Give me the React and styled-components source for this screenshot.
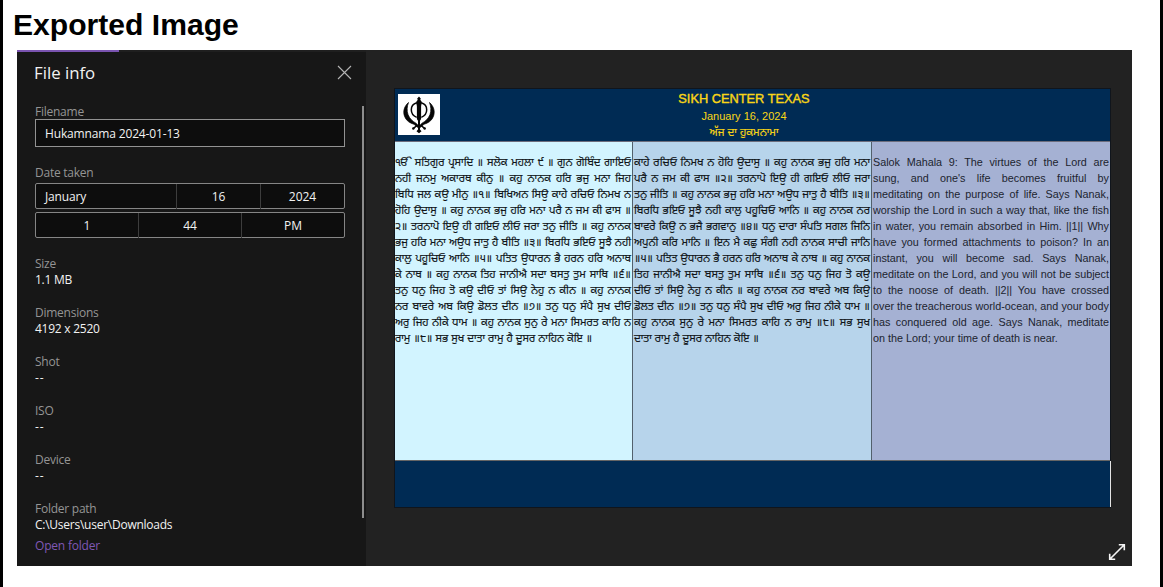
import React from "react";
import styled, { createGlobalStyle } from "styled-components";

const Global = createGlobalStyle`
  *, *::before, *::after { box-sizing: border-box; }
  body { margin: 0; background: #fff; overflow: hidden; }
`;

const Page = styled.main`
  height: 587px;
  padding: 0 28px 0 14px;
  border-left: 3px solid #000;
  border-right: 3px solid #000;
  background: #fff;
`;

const Heading = styled.h1`
  margin: 0 0 0 -4px;
  height: 50px;
  font: bold 30.1px/50px "Liberation Sans", Arial, sans-serif;
  color: #000;
`;

const Viewer = styled.section`
  display: flex;
  width: 1115px;
  height: 516px;
  background: #222;
`;

const Sidebar = styled.aside`
  width: 349px;
  background: #171717;
  font-family: "Open Sans", "Noto Sans", sans-serif;
  font-size: 12px;
  line-height: 16px;
  color: #f2f2f2;
`;

const Progress = styled.div`
  height: 2px;
  background: #1f1f1f;
  &::before {
    content: "";
    display: block;
    width: 102px;
    height: 2px;
    background: #7a54b0;
  }
`;

const SidebarHeader = styled.header`
  display: flex;
  align-items: center;
  justify-content: space-between;
  height: 41px;
  padding: 0 14px 0 17px;
`;

const SidebarTitle = styled.h2`
  margin: 0;
  font-size: 16.8px;
  font-weight: 400;
  line-height: 24px;
`;

const Scroller = styled.div`
  display: flex;
  justify-content: space-between;
  margin-top: 11px;
  padding: 0 2px 0 18px;
`;

const ScrollThumb = styled.div`
  width: 2px;
  height: 412px;
  margin-top: 2px;
  background: #8d8d8d;
`;

const Details = styled.div`
  width: 310px;
`;

const Label = styled.div`
  color: #959595;
  letter-spacing: -0.25px;
`;

const Value = styled.div`
  letter-spacing: ${(p) => (p.$empty ? "0.8px" : "-0.25px")};
`;

const Field = styled.div`
  margin-bottom: ${(p) => p.$gap || "17px"};
`;

const TextBox = styled.div`
  height: 28px;
  margin-top: -1px;
  padding-left: 9px;
  border: 1px solid #929292;
  background: #0d0d0d;
  line-height: 28px;
  letter-spacing: -0.15px;
`;

const DateRows = styled.div`
  padding-top: 2px;
`;

const Segments = styled.div`
  display: grid;
  grid-template-columns: ${(p) => p.$columns};
  height: 26px;
  margin-bottom: 3px;
  border: 1px solid #858585;
  border-radius: 2px;
  background: #0d0d0d;
  line-height: 25px;
`;

const Segment = styled.div`
  padding-left: ${(p) => (p.$start ? "9px" : "0")};
  text-align: ${(p) => (p.$start ? "left" : "center")};
  letter-spacing: ${(p) => (p.$start ? "-0.15px" : "0")};
  & + & { border-left: 1px solid #3d3d3d; }
`;

const FolderLink = styled.a`
  display: block;
  margin-top: 5px;
  color: #8058b5;
  letter-spacing: -0.2px;
`;

const Preview = styled.div`
  display: flex;
  flex-direction: column;
  flex: 1;
  padding: 38px 21px 0 28px;
`;

const Slide = styled.article`
  display: flex;
  flex-direction: column;
  width: 717px;
  height: 420px;
  border: 1px solid #10151c;
  font-family: "Liberation Sans", "Noto Sans Gurmukhi", sans-serif;
`;

const SlideHeader = styled.header`
  display: grid;
  grid-template-columns: 42px 1fr 42px;
  height: 53px;
  padding: 5px 16px 0 3px;
  border-bottom: 1px solid #6d6d7c;
  background: #002b54;
`;

const Emblem = styled.svg`
  display: block;
  width: 42px;
  height: 41px;
  background: #fff;
`;

const Titles = styled.div`
  margin-top: -4px;
  padding-right: 4px;
  color: #f9d616;
  text-align: center;
`;

const SlideTitle = styled.div`
  font-size: 12.8px;
  line-height: 17px;
  -webkit-text-stroke: 0.4px #f9d616;
`;

const SlideDate = styled.div`
  font-size: 11px;
  line-height: 18px;
`;

const SlideSubtitle = styled.div`
  font-size: 11px;
  line-height: 14px;
  -webkit-text-stroke: 0.15px #f9d616;
`;

const Columns = styled.div`
  display: grid;
  grid-template-columns: 237px 239px 239px;
  height: 319px;
  border-bottom: 1px solid #656565;
`;

const Column = styled.div`
  padding: 12px 1px 0 ${(p) => (p.$first ? "0" : "1px")};
  background: ${(p) => p.$bg};
  color: ${(p) => p.$ink || "#101418"};
  font-size: ${(p) => p.$size};
  -webkit-text-stroke: ${(p) => p.$stroke || "0"};
  & + & { border-left: 1px solid #52606c; }
`;

const Line = styled.div`
  height: 16px;
  line-height: 16px;
  white-space: nowrap;
  text-align: justify;
  text-align-last: justify;
  &:last-child { text-align-last: left; }
`;

const SlideFooter = styled.footer`
  flex: 1;
  background: #002b54;
  margin-right: -1px;
  border-right: 1px solid #e4e4e4;
`;

const ExpandIcon = styled.svg`
  align-self: flex-end;
  width: 18px;
  height: 18px;
  margin: 35px -15px 0 0;
`;

const gurmukhi = [
  "ੴ ਸਤਿਗੁਰ ਪ੍ਰਸਾਦਿ ॥ ਸਲੋਕ ਮਹਲਾ ੯ ॥ ਗੁਨ ਗੋਬਿੰਦ ਗਾਇਓ",
  "ਨਹੀ ਜਨਮੁ ਅਕਾਰਥ ਕੀਨੁ ॥ ਕਹੁ ਨਾਨਕ ਹਰਿ ਭਜੁ ਮਨਾ ਜਿਹ",
  "ਬਿਧਿ ਜਲ ਕਉ ਮੀਨੁ ॥੧॥ ਬਿਖਿਅਨ ਸਿਉ ਕਾਹੇ ਰਚਿਓ ਨਿਮਖ ਨ",
  "ਹੋਹਿ ਉਦਾਸੁ ॥ ਕਹੁ ਨਾਨਕ ਭਜੁ ਹਰਿ ਮਨਾ ਪਰੈ ਨ ਜਮ ਕੀ ਫਾਸ ॥",
  "੨॥ ਤਰਨਾਪੋ ਇਉ ਹੀ ਗਇਓ ਲੀਓ ਜਰਾ ਤਨੁ ਜੀਤਿ ॥ ਕਹੁ ਨਾਨਕ",
  "ਭਜੁ ਹਰਿ ਮਨਾ ਅਉਧ ਜਾਤੁ ਹੈ ਬੀਤਿ ॥੩॥ ਬਿਰਧਿ ਭਇਓ ਸੂਝੈ ਨਹੀ",
  "ਕਾਲੁ ਪਹੂਚਿਓ ਆਨਿ ॥੫॥ ਪਤਿਤ ਉਧਾਰਨ ਭੈ ਹਰਨ ਹਰਿ ਅਨਾਥ",
  "ਕੇ ਨਾਥ ॥ ਕਹੁ ਨਾਨਕ ਤਿਹ ਜਾਨੀਐ ਸਦਾ ਬਸਤੁ ਤੁਮ ਸਾਥਿ ॥੬॥",
  "ਤਨੁ ਧਨੁ ਜਿਹ ਤੋ ਕਉ ਦੀਓ ਤਾਂ ਸਿਉ ਨੇਹੁ ਨ ਕੀਨ ॥ ਕਹੁ ਨਾਨਕ",
  "ਨਰ ਬਾਵਰੇ ਅਬ ਕਿਉ ਡੋਲਤ ਦੀਨ ॥੭॥ ਤਨੁ ਧਨੁ ਸੰਪੈ ਸੁਖ ਦੀਓ",
  "ਅਰੁ ਜਿਹ ਨੀਕੇ ਧਾਮ ॥ ਕਹੁ ਨਾਨਕ ਸੁਨੁ ਰੇ ਮਨਾ ਸਿਮਰਤ ਕਾਹਿ ਨ",
  "ਰਾਮੁ ॥੮॥ ਸਭ ਸੁਖ ਦਾਤਾ ਰਾਮੁ ਹੈ ਦੂਸਰ ਨਾਹਿਨ ਕੋਇ ॥",
];

const gurmukhiContinued = [
  "ਕਾਹੇ ਰਚਿਓ ਨਿਮਖ ਨ ਹੋਹਿ ਉਦਾਸੁ ॥ ਕਹੁ ਨਾਨਕ ਭਜੁ ਹਰਿ ਮਨਾ",
  "ਪਰੈ ਨ ਜਮ ਕੀ ਫਾਸ ॥੨॥ ਤਰਨਾਪੋ ਇਉ ਹੀ ਗਇਓ ਲੀਓ ਜਰਾ",
  "ਤਨੁ ਜੀਤਿ ॥ ਕਹੁ ਨਾਨਕ ਭਜੁ ਹਰਿ ਮਨਾ ਅਉਧ ਜਾਤੁ ਹੈ ਬੀਤਿ ॥੩॥",
  "ਬਿਰਧਿ ਭਇਓ ਸੂਝੈ ਨਹੀ ਕਾਲੁ ਪਹੂਚਿਓ ਆਨਿ ॥ ਕਹੁ ਨਾਨਕ ਨਰ",
  "ਬਾਵਰੇ ਕਿਉ ਨ ਭਜੈ ਭਗਵਾਨੁ ॥੪॥ ਧਨੁ ਦਾਰਾ ਸੰਪਤਿ ਸਗਲ ਜਿਨਿ",
  "ਅਪੁਨੀ ਕਰਿ ਮਾਨਿ ॥ ਇਨ ਮੈ ਕਛੁ ਸੰਗੀ ਨਹੀ ਨਾਨਕ ਸਾਚੀ ਜਾਨਿ",
  "॥੫॥ ਪਤਿਤ ਉਧਾਰਨ ਭੈ ਹਰਨ ਹਰਿ ਅਨਾਥ ਕੇ ਨਾਥ ॥ ਕਹੁ ਨਾਨਕ",
  "ਤਿਹ ਜਾਨੀਐ ਸਦਾ ਬਸਤੁ ਤੁਮ ਸਾਥਿ ॥੬॥ ਤਨੁ ਧਨੁ ਜਿਹ ਤੋ ਕਉ",
  "ਦੀਓ ਤਾਂ ਸਿਉ ਨੇਹੁ ਨ ਕੀਨ ॥ ਕਹੁ ਨਾਨਕ ਨਰ ਬਾਵਰੇ ਅਬ ਕਿਉ",
  "ਡੋਲਤ ਦੀਨ ॥੭॥ ਤਨੁ ਧਨੁ ਸੰਪੈ ਸੁਖ ਦੀਓ ਅਰੁ ਜਿਹ ਨੀਕੇ ਧਾਮ ॥",
  "ਕਹੁ ਨਾਨਕ ਸੁਨੁ ਰੇ ਮਨਾ ਸਿਮਰਤ ਕਾਹਿ ਨ ਰਾਮੁ ॥੮॥ ਸਭ ਸੁਖ",
  "ਦਾਤਾ ਰਾਮੁ ਹੈ ਦੂਸਰ ਨਾਹਿਨ ਕੋਇ ॥",
];

const english = [
  "Salok Mahala 9: The virtues of the Lord are",
  "sung, and one's life becomes fruitful by",
  "meditating on the purpose of life. Says Nanak,",
  "worship the Lord in such a way that, like the fish",
  "in water, you remain absorbed in Him. ||1|| Why",
  "have you formed attachments to poison? In an",
  "instant, you will become sad. Says Nanak,",
  "meditate on the Lord, and you will not be subject",
  "to the noose of death. ||2|| You have crossed",
  "over the treacherous world-ocean, and your body",
  "has conquered old age. Says Nanak, meditate",
  "on the Lord; your time of death is near.",
];

const details = [
  ["Size", "1.1 MB"],
  ["Dimensions", "4192 x 2520"],
  ["Shot", "--"],
  ["ISO", "--"],
  ["Device", "--"],
];

function TextColumn({ lines, ...rest }) {
  return (
    <Column {...rest}>
      {lines.map((line) => (
        <Line key={line}>{line}</Line>
      ))}
    </Column>
  );
}

function Khanda() {
  const sword =
    "M10.500 8.500C6 12.500 4.800 17.500 6.600 22.500C8.300 27 12 29 16 30.300L20.800 34.200L21 32.500L18.300 29.400C14.500 27.300 11.500 24.500 10 20.500C8.700 16.800 8.900 12.500 10.500 8.500Z";
  return (
    <Emblem viewBox="0 0 42 41">
      <g fill="#050505">
        <path d="M21 2.500l1.900 2.300-.7 1 1.500 2c.7 1.300-.6 2.500-.6 4.700v12.500L21 28.500l-2.100-3.500V12.500c0-2.200-1.300-3.400-.6-4.700l1.500-2-.7-1z" />
        <path d={sword} stroke="#050505" strokeWidth="0.700" />
        <path
          d={sword}
          stroke="#050505"
          strokeWidth="0.700"
          transform="matrix(-1 0 0 1 42 0)"
        />
        <path d="M20 27h2v8.500l1.500 1.700L21 39.300l-2.500-2.100 1.500-1.700z" />
        <circle cx="15.300" cy="34.500" r="1.200" />
        <circle cx="26.700" cy="34.500" r="1.200" />
      </g>
      <path
        d="M18.700 8.800C11.500 11 11.500 20.500 18.700 23.400M23.300 8.800C30.500 11 30.500 20.500 23.300 23.400M19.500 31L15.500 34.300M22.500 31L26.500 34.300"
        fill="none"
        stroke="#050505"
        strokeWidth="1.500"
      />
    </Emblem>
  );
}

export default function App() {
  return (
    <Page>
      <Global />
      <Heading>Exported Image</Heading>
      <Viewer>
        <Sidebar>
          <Progress />
          <SidebarHeader>
            <SidebarTitle>File info</SidebarTitle>
            <svg width="15" height="15" viewBox="0 0 15 15">
              <path d="M1 1l13 13M14 1L1 14" stroke="#b5b5b5" strokeWidth="1.100" />
            </svg>
          </SidebarHeader>
          <Scroller>
            <Details>
              <Field $gap="18px">
                <Label>Filename</Label>
                <TextBox>Hukamnama 2024-01-13</TextBox>
              </Field>
              <Field $gap="18px">
                <Label>Date taken</Label>
                <DateRows>
                  <Segments $columns="140px 84px 1fr">
                    <Segment $start>January</Segment>
                    <Segment>16</Segment>
                    <Segment>2024</Segment>
                  </Segments>
                  <Segments $columns="102px 103px 1fr">
                    <Segment>1</Segment>
                    <Segment>44</Segment>
                    <Segment>PM</Segment>
                  </Segments>
                </DateRows>
              </Field>
              {details.map(([label, value]) => (
                <Field key={label}>
                  <Label>{label}</Label>
                  <Value $empty={value === "--"}>{value}</Value>
                </Field>
              ))}
              <Field>
                <Label>Folder path</Label>
                <Value>C:\Users\user\Downloads</Value>
                <FolderLink>Open folder</FolderLink>
              </Field>
            </Details>
            <ScrollThumb />
          </Scroller>
        </Sidebar>
        <Preview>
          <Slide>
            <SlideHeader>
              <Khanda />
              <Titles>
                <SlideTitle>SIKH CENTER TEXAS</SlideTitle>
                <SlideDate>January 16, 2024</SlideDate>
                <SlideSubtitle>ਅੱਜ ਦਾ ਹੁਕਮਨਾਮਾ</SlideSubtitle>
              </Titles>
            </SlideHeader>
            <Columns>
              <TextColumn lines={gurmukhi} $first $bg="#d2f4ff" $size="10.9px" $stroke="0.15px #101418" />
              <TextColumn lines={gurmukhiContinued} $bg="#b7d4eb" $size="10.9px" $stroke="0.15px #101418" />
              <TextColumn lines={english} $bg="#a5b1d3" $ink="#20242f" $size="10.8px" />
            </Columns>
            <SlideFooter />
          </Slide>
          <ExpandIcon viewBox="0 0 18 18">
            <path
              d="M2 16L16 2M10.800 1.700H16.300V7.200M1.700 10.800V16.300H7.200"
              fill="none"
              stroke="#f4f4f4"
              strokeWidth="1.600"
            />
          </ExpandIcon>
        </Preview>
      </Viewer>
    </Page>
  );
}
